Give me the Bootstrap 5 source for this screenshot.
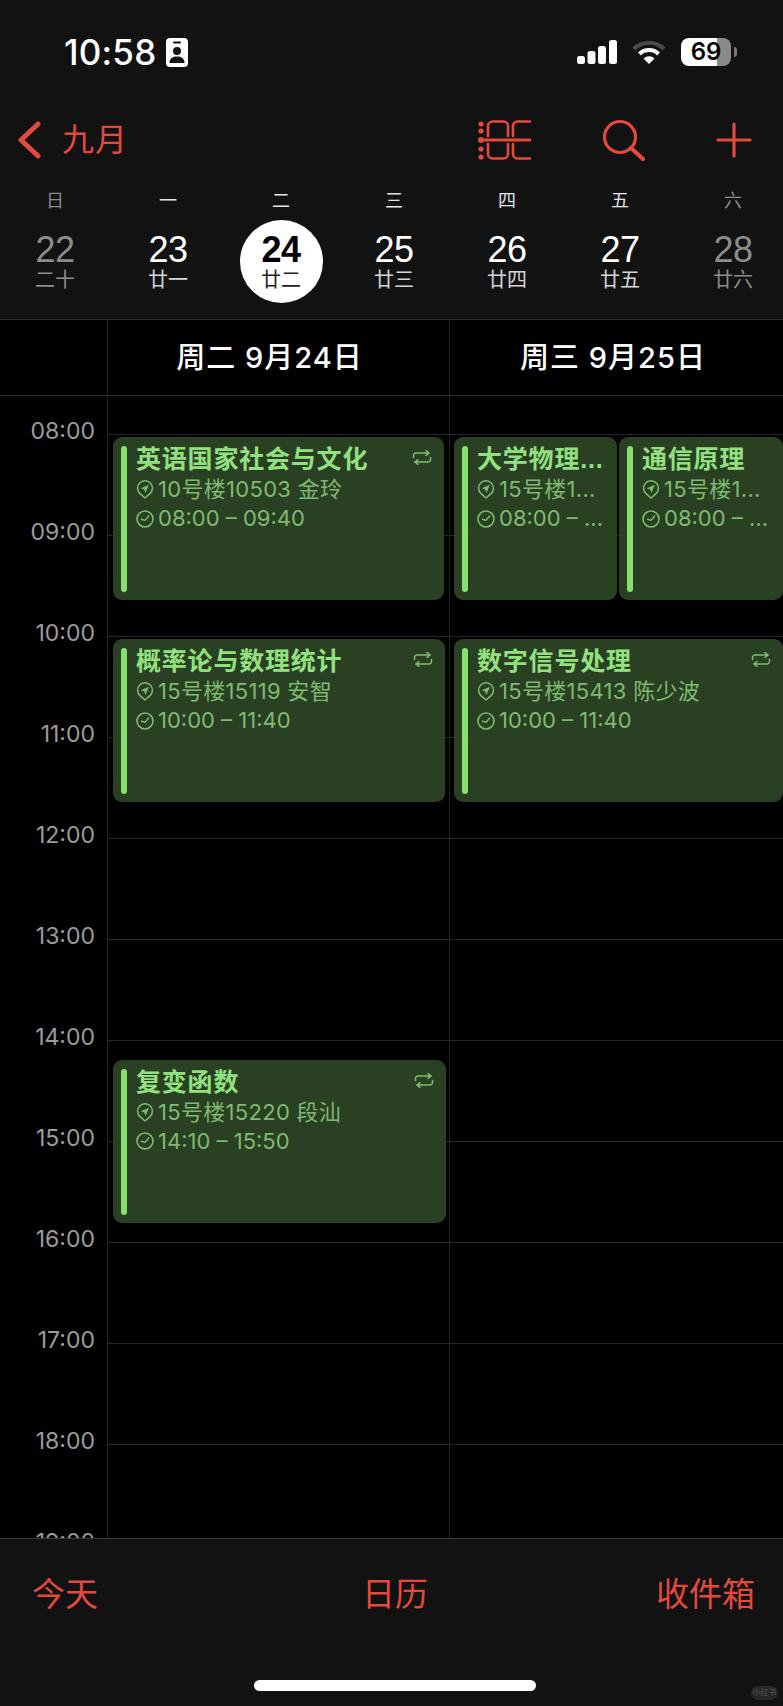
<!DOCTYPE html>
<html lang="zh">
<head>
  <meta charset="UTF-8">
  <title>日历</title>
  <meta name="viewport" content="width=device-width, initial-scale=1">
  <link href="https://cdn.jsdelivr.net/npm/bootstrap@5.3.3/dist/css/bootstrap.min.css" rel="stylesheet">
  <style>
    html, body { height: 100%; }
    body {
      background: #000;
      color: #fff;
      height: 1706px;
      overflow: hidden;
      font-family: "Liberation Sans", "Noto Sans CJK SC", sans-serif;
    }
    .red-text { color: #e3493c; }
    .phone-top { background: #121212; border-bottom: 1px solid #2b2b2b; height: 320px; flex: none; }

    /* status bar */
    .status-line { height: 104px; padding: 0 46px 0 64px; }
    .clock-text { font-family: Inter, "Liberation Sans", sans-serif; font-size: 35px; font-weight: 500; line-height: 1; letter-spacing: .2px; }
    .id-badge { margin-left: 10px; }
    .status-right { gap: 15px; }
    .batt-box { font-family: Inter, "Liberation Sans", sans-serif; width: 50px; height: 28px; border-radius: 8px; background: linear-gradient(90deg, #fff 36px, #8a8a8a 36px); color: #000; font-size: 24px; font-weight: 600; line-height: 28px; }
    .batt-tip { width: 3px; height: 10px; background: #777; border-radius: 0 3px 3px 0; margin-left: 3px; }

    /* nav */
    .nav-line { height: 72px; padding: 0 31px 0 18px; }
    .month-text { font-size: 32px; line-height: 1; margin-left: 21px; letter-spacing: 1px; }
    .nav-icons { gap: 71px; }

    /* week strip */
    .week-strip { padding: 14px 0 0 5px; }
    .day-col { width: 100px; text-align: center; }
    .wk-name { font-size: 18px; line-height: 22px; margin-bottom: 8px; color: #e4e4e4; }
    .day-cell { width: 83px; height: 83px; margin: 0 auto; padding-top: 15px; }
    .day-num { font-size: 36px; line-height: 29px; letter-spacing: -.5px; }
    .day-lunar { font-size: 20px; line-height: 20px; margin-top: 6px; color: #d6d6d6; }
    .is-off .wk-name, .is-off .day-num, .is-off .day-lunar { color: #8c8c8c; }
    .is-today .day-cell { background: #fff; }
    .is-today .day-num { color: #000; font-weight: 700; }
    .is-today .day-lunar { color: #222; }

    /* day header and grid */
    .gutter-w { width: 107px; flex: none; }
    .col-a { width: 342px; flex: none; border-left: 1px solid #222; }
    .col-b { flex: 1 1 auto; border-left: 1px solid #222; }
    .day-heads { height: 76px; flex: none; border-bottom: 1px solid #2b2b2b; }
    .day-title { font-family: Inter, "Noto Sans CJK SC", sans-serif; font-size: 29px; font-weight: 500; line-height: 75px; letter-spacing: 1px; text-align: center; }
    .col-a.day-title { padding-right: 18px; }
    .col-b.day-title { padding-right: 7px; }
    .grid-area { flex: 1 1 auto; min-height: 0; overflow: hidden; }
    .hour-labels { font-family: Inter, "Liberation Sans", sans-serif; padding: 23px 12px 0 0; text-align: right; }
    .hour-label { height: 101px; font-size: 23px; line-height: 24px; color: #9c9c9c; }
    .hour-lines { padding-top: 38px; }
    .hour-slot { height: 101px; border-top: 1px solid #262626; }

    /* events */
    .event-card { background: rgba(43, 66, 36, .97); border-radius: 9px; padding: 8px; height: 163px; color: #7fba72; overflow: hidden; }
    .event-bar { width: 6px; flex: none; background: #88e070; border-radius: 3px; margin: 1px 9px 0 0; }
    .event-title { font-family: "Liberation Sans", "Noto Sans CJK SC", sans-serif; font-size: 25px; font-weight: 600; line-height: 28px; letter-spacing: .8px; color: #92e07f; margin-bottom: 2px; white-space: nowrap; }
    .event-meta { font-family: Inter, "Liberation Sans", "Noto Sans CJK SC", sans-serif; font-size: 22px; line-height: 29px; gap: 4px; white-space: nowrap; }
    .event-place { letter-spacing: .3px; }
    .event-loop { top: 13px; right: 12px; }
    .event-body { min-width: 0; }

    /* tab bar */
    .tab-foot { height: 168px; flex: none; background: #121212; border-top: 1px solid #3a3a3a; }
    .tab-row { display: grid; grid-template-columns: 1fr auto 1fr; padding: 39px 28px 0 32px; font-size: 33px; line-height: 33px; }
    .tab-mid { padding-left: 3px; }
    .home-bar { width: 282px; height: 11px; background: #fff; border-radius: 6px; margin: 69px 0 0 254px; }
    .mark-stamp { right: 5px; bottom: 6px; width: 27px; height: 14px; background: #272727; color: #555; font-size: 8px; line-height: 14px; border-radius: 7px; }
  </style>
</head>
<body class="d-flex flex-column">

  <svg width="0" height="0" class="position-absolute">
    <symbol id="ic-pin" viewBox="0 0 18 19">
      <path d="M9 18 L4 13.6 A7.4 7.4 0 1 1 14 13.6 Z" fill="none" stroke="currentColor" stroke-width="1.5" stroke-linejoin="round"/>
      <path d="M13 4.8 L4.8 8.3 L8.3 9.4 L9.4 13 Z" fill="currentColor"/>
    </symbol>
    <symbol id="ic-clock" viewBox="0 0 18 18">
      <circle cx="9" cy="9" r="8" fill="none" stroke="currentColor" stroke-width="1.6"/>
      <polyline points="5.5,9.2 9,10.4 12.6,6" fill="none" stroke="currentColor" stroke-width="1.5" stroke-linecap="round" stroke-linejoin="round"/>
    </symbol>
    <symbol id="ic-loop" viewBox="0 0 20 15">
      <path d="M1.5 7.5 V5.5 a2.5 2.5 0 0 1 2.5 -2.5 H17 M14 .6 L17.2 3 L14 5.4" fill="none" stroke="currentColor" stroke-width="1.5" stroke-linecap="round" stroke-linejoin="round"/>
      <path d="M18.5 7.5 V9.5 a2.5 2.5 0 0 1 -2.5 2.5 H3 M6 9.6 L2.8 12 L6 14.4" fill="none" stroke="currentColor" stroke-width="1.5" stroke-linecap="round" stroke-linejoin="round"/>
    </symbol>
  </svg>

  <header class="phone-top">
    <div class="status-line d-flex align-items-center justify-content-between">
      <div class="d-flex align-items-center">
        <span class="clock-text">10:58</span>
        <svg class="id-badge" width="22" height="29" viewBox="0 0 22 29">
          <rect width="22" height="29" rx="4" fill="#fff"/>
          <rect x="7" y="3.5" width="8" height="2" rx="1" fill="#121212"/>
          <circle cx="11" cy="13" r="4" fill="#121212"/>
          <path d="M3.5 25 C3.5 20 7 18.5 11 18.5 C15 18.5 18.5 20 18.5 25 Z" fill="#121212"/>
        </svg>
      </div>
      <div class="status-right d-flex align-items-center">
        <svg width="40" height="24" viewBox="0 0 40 24" fill="#fff">
          <rect x="0" y="16" width="8" height="8" rx="2.5"/>
          <rect x="10.5" y="11" width="8" height="13" rx="2.5"/>
          <rect x="21" y="6" width="8" height="18" rx="2.5"/>
          <rect x="32" y="0" width="8" height="24" rx="2.5"/>
        </svg>
        <svg width="34" height="24" viewBox="0 0 34 24" fill="none" stroke-width="4">
          <path d="M2 9 A21 21 0 0 1 32 9" stroke="#4a4a4a"/>
          <path d="M7.5 14 A13.5 13.5 0 0 1 26.5 14" stroke="#fff"/>
          <path d="M17 24 L11.5 18.4 A7.8 7.8 0 0 1 22.5 18.4 Z" fill="#fff" stroke="none"/>
        </svg>
        <div class="d-flex align-items-center">
          <div class="batt-box text-center">69</div>
          <div class="batt-tip"></div>
        </div>
      </div>
    </div>

    <div class="nav-line d-flex align-items-center">
      <svg width="23" height="38" viewBox="0 0 23 38" fill="none" stroke="#e3493c" stroke-width="5" stroke-linecap="round" stroke-linejoin="round">
        <polyline points="20,3 3,19 20,35"/>
      </svg>
      <span class="month-text red-text">九月</span>
      <div class="nav-icons d-flex align-items-center ms-auto">
        <svg width="53" height="40" viewBox="0 0 53 40" fill="none" stroke="#e3493c" stroke-width="2.6" stroke-linecap="round">
          <path d="M2 20 H52.5" stroke-width="3"/>
          <path d="M10 16 V6 a4.5 4.5 0 0 1 4.5 -4.5 H25.5 a4.5 4.5 0 0 1 4.5 4.5 V16"/>
          <path d="M35 16 V6 a4.5 4.5 0 0 1 4.5 -4.5 H52"/>
          <path d="M10 24 V34 a4.5 4.5 0 0 0 4.5 4.5 H25.5 a4.5 4.5 0 0 0 4.5 -4.5 V24"/>
          <path d="M35 24 V34 a4.5 4.5 0 0 0 4.5 4.5 H52"/>
          <g fill="#e3493c" stroke="none">
            <circle cx="3" cy="4" r="2.6"/><circle cx="3" cy="11" r="2.6"/><circle cx="3" cy="20" r="3"/><circle cx="3" cy="29" r="2.6"/><circle cx="3" cy="37" r="2.6"/>
          </g>
        </svg>
        <svg width="43" height="42" viewBox="0 0 43 42" fill="none" stroke="#e3493c" stroke-linecap="round">
          <circle cx="18" cy="18" r="15.5" stroke-width="3.2"/>
          <path d="M29 29 L41 40" stroke-width="4.2"/>
        </svg>
        <svg width="36" height="36" viewBox="0 0 36 36" fill="none" stroke="#e3493c" stroke-width="3.2" stroke-linecap="round">
          <path d="M18 2 V34 M2 18 H34"/>
        </svg>
      </div>
    </div>

    <div class="week-strip d-flex justify-content-between" id="weekStrip"></div>
  </header>

  <div class="day-heads d-flex">
    <div class="gutter-w"></div>
    <div class="col-a day-title">周二 9月24日</div>
    <div class="col-b day-title">周三 9月25日</div>
  </div>

  <main class="grid-area d-flex">
    <div class="gutter-w hour-labels" id="hourLabels"></div>
    <div class="col-a position-relative hour-lines" id="colTue"></div>
    <div class="col-b position-relative hour-lines" id="colWed"></div>
  </main>

  <footer class="tab-foot position-relative">
    <div class="tab-row red-text">
      <span>今天</span>
      <span class="tab-mid">日历</span>
      <span class="text-end">收件箱</span>
    </div>
    <div class="home-bar"></div>
    <div class="mark-stamp position-absolute text-center">小红书</div>
  </footer>

  <script src="https://cdn.jsdelivr.net/npm/bootstrap@5.3.3/dist/js/bootstrap.bundle.min.js"></script>
  <script>
    const days = [
      ["日", "22", "二十", "is-off"], ["一", "23", "廿一", ""], ["二", "24", "廿二", "is-today"],
      ["三", "25", "廿三", ""], ["四", "26", "廿四", ""], ["五", "27", "廿五", ""], ["六", "28", "廿六", "is-off"]
    ];
    document.getElementById('weekStrip').innerHTML = days.map(d => `
      <div class="day-col ${d[3]}">
        <div class="wk-name">${d[0]}</div>
        <div class="day-cell rounded-circle">
          <div class="day-num">${d[1]}</div>
          <div class="day-lunar">${d[2]}</div>
        </div>
      </div>`).join('');

    // hour grid, 101px per hour starting at 08:00
    const HOUR = 101, FIRST = 8, TOP = 38;
    let labels = '', slots = '';
    for (let h = FIRST; h <= 19; h++) {
      labels += `<div class="hour-label">${String(h).padStart(2, '0')}:00</div>`;
      slots += '<div class="hour-slot"></div>';
    }
    document.getElementById('hourLabels').innerHTML = labels;
    document.getElementById('colTue').innerHTML = slots;
    document.getElementById('colWed').innerHTML = slots;

    const events = [
      { col: 'colTue', start: 8, left: 5, width: 331, title: '英语国家社会与文化', place: '10号楼10503 金玲', time: '08:00 – 09:40', loop: true },
      { col: 'colTue', start: 10, left: 5, width: 332, title: '概率论与数理统计', place: '15号楼15119 安智', time: '10:00 – 11:40', loop: true },
      { col: 'colTue', start: 14 + 10 / 60, left: 5, width: 333, title: '复变函数', place: '15号楼15220 段汕', time: '14:10 – 15:50', loop: true },
      { col: 'colWed', start: 8, left: 4, width: 163, title: '大学物理...', place: '15号楼1...', time: '08:00 – ...' },
      { col: 'colWed', start: 8, left: 169, width: 164, title: '通信原理', place: '15号楼1...', time: '08:00 – ...' },
      { col: 'colWed', start: 10, left: 4, width: 329, title: '数字信号处理', place: '15号楼15413 陈少波', time: '10:00 – 11:40', loop: true }
    ];
    events.forEach(ev => {
      const card = document.createElement('div');
      card.className = 'event-card position-absolute d-flex';
      card.style.top = (TOP + (ev.start - FIRST) * HOUR + 3) + 'px';
      card.style.left = ev.left + 'px';
      card.style.width = ev.width + 'px';
      card.innerHTML = `
        <div class="event-bar"></div>
        <div class="event-body flex-grow-1">
          <div class="event-title">${ev.title}</div>
          <div class="event-meta d-flex align-items-center"><svg width="18" height="19"><use href="#ic-pin"/></svg><span class="event-place">${ev.place}</span></div>
          <div class="event-meta d-flex align-items-center"><svg width="18" height="18"><use href="#ic-clock"/></svg><span>${ev.time}</span></div>
        </div>
        ${ev.loop ? '<svg class="event-loop position-absolute" width="20" height="15"><use href="#ic-loop"/></svg>' : ''}`;
      document.getElementById(ev.col).appendChild(card);
    });
  </script>
</body>
</html>
